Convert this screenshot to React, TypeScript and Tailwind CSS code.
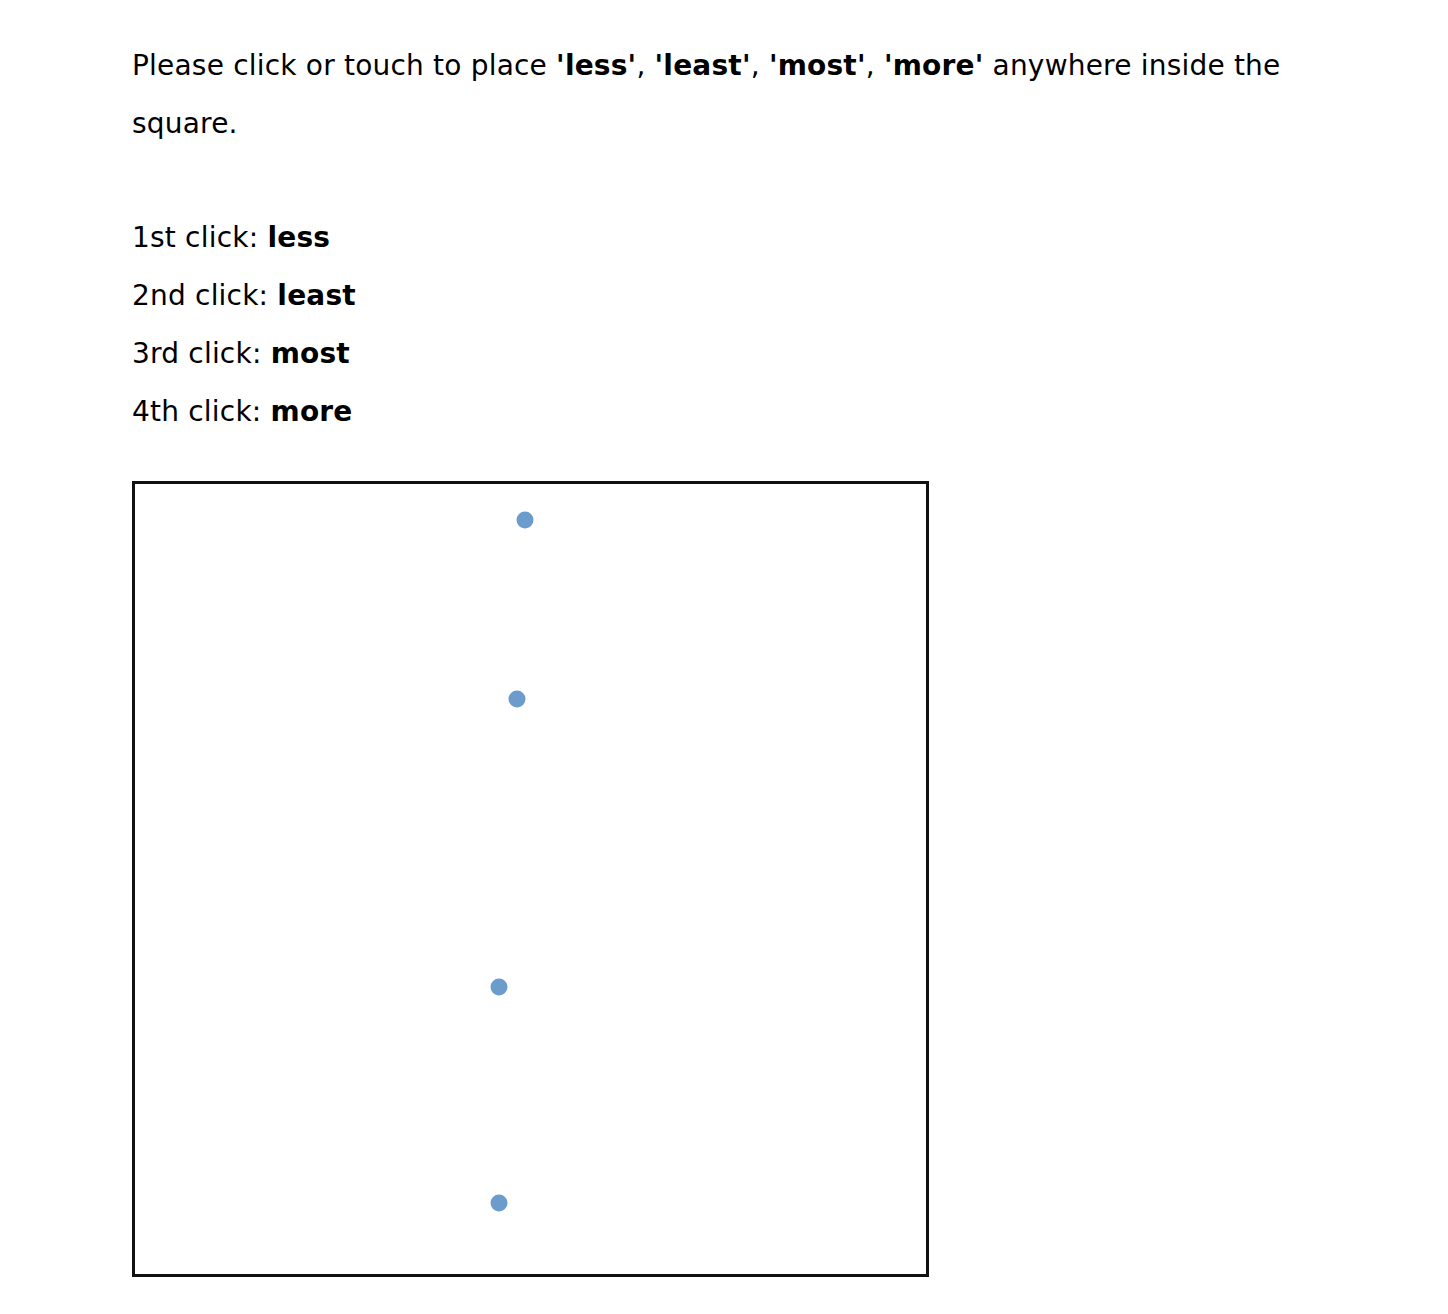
import React from "react";

const dots = [
  { x: 525, y: 520 },
  { x: 517, y: 699 },
  { x: 499, y: 987 },
  { x: 499, y: 1203 },
];

const clicks = [
  ["1st", "less"],
  ["2nd", "least"],
  ["3rd", "most"],
  ["4th", "more"],
];

export default function App() {
  return (
    <div className="min-h-screen bg-white text-black font-['DejaVu_Sans',sans-serif] text-[28px] leading-[58px] tracking-[0.2px]">
      <div className="pl-[132px] pt-[37px]">
        <p className="w-[1200px]">
          Please click or touch to place <b>'less'</b>, <b>'least'</b>,{" "}
          <b>'most'</b>, <b>'more'</b> anywhere inside the square.
        </p>
        <div className="mt-[56px]">
          {clicks.map(([n, w]) => (
            <div key={n}>
              {n} click: <b>{w}</b>
            </div>
          ))}
        </div>
        <div className="relative mt-[40px] w-[797px] h-[796px] border-[3px] border-[#111]">
          {dots.map((d, i) => (
            <span
              key={i}
              className="absolute w-[17px] h-[17px] rounded-full bg-[#6b9ccc] -translate-x-1/2 -translate-y-1/2"
              style={{ left: d.x - 135, top: d.y - 484 }}
            />
          ))}
        </div>
      </div>
    </div>
  );
}
